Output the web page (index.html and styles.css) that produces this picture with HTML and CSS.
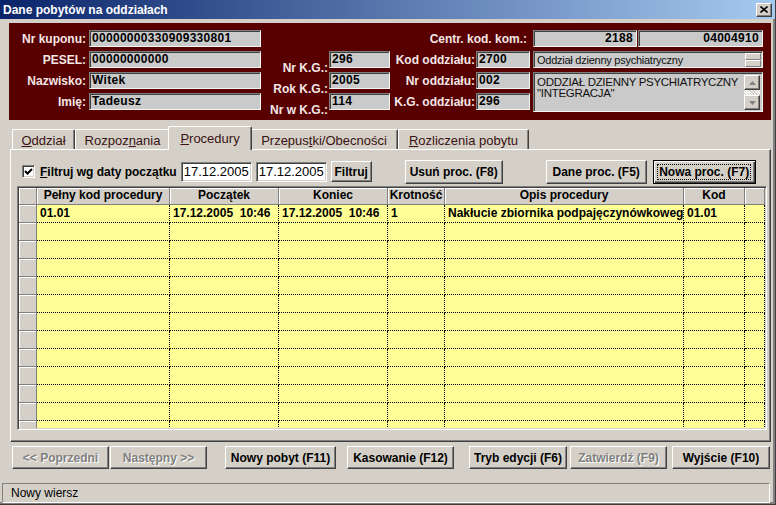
FILE: index.html
```html
<!DOCTYPE html>
<html lang="pl">
<head>
<meta charset="utf-8">
<title>Dane pobytów na oddziałach</title>
<link rel="stylesheet" href="styles.css">
</head>
<body>
<div class="window">
  <div class="titlebar">
    <span class="title">Dane pobytów na oddziałach</span>
    <span class="close"><svg width="8" height="7" viewBox="0 0 8 7"><path d="M0.5 0.5 L7.5 6.5 M7.5 0.5 L0.5 6.5" stroke="#000" stroke-width="1.6" fill="none"/></svg></span>
  </div>

  <div class="content">
    <div class="patient">
      <span class="plabel c1 r1">Nr kuponu:</span>
      <span class="fld c2 r1">00000000330909330801</span>
      <span class="plabel centr r1">Centr. kod. kom.:</span>
      <span class="pair c7 r1"><span class="fld num w104">2188</span><span class="fld num grow">04004910</span></span>

      <span class="plabel c1 r2">PESEL:</span>
      <span class="fld c2 r2">00000000000</span>
      <span class="plabel low c3 r2">Nr K.G.:</span>
      <span class="fld c4 r2">296</span>
      <span class="plabel c5 r2">Kod oddziału:</span>
      <span class="fld c6 r2">2700</span>
      <span class="fld combo c7 r2"><span class="combo-text">Oddział dzienny psychiatryczny</span><span class="spin"><span class="spin-btn"></span><span class="spin-btn"></span></span></span>

      <span class="plabel c1 r3">Nazwisko:</span>
      <span class="fld c2 r3">Witek</span>
      <span class="plabel low c3 r3">Rok K.G.:</span>
      <span class="fld c4 r3">2005</span>
      <span class="plabel c5 r3">Nr oddziału:</span>
      <span class="fld c6 r3">002</span>
      <span class="fld memo c7 r34">
        <span class="memo-text">ODDZIAŁ DZIENNY PSYCHIATRYCZNY<br>"INTEGRACJA"</span>
        <span class="vscroll">
          <span class="sb-btn"><svg width="7" height="4" viewBox="0 0 7 4"><path d="M3.5 0 L7 4 L0 4 Z" fill="#808080"/></svg></span>
          <span class="sb-track"></span>
          <span class="sb-btn"><svg width="7" height="4" viewBox="0 0 7 4"><path d="M0 0 L7 0 L3.5 4 Z" fill="#808080"/></svg></span>
        </span>
      </span>

      <span class="plabel c1 r4">Imię:</span>
      <span class="fld c2 r4">Tadeusz</span>
      <span class="plabel low c3 r4">Nr w K.G.:</span>
      <span class="fld c4 r4">114</span>
      <span class="plabel c5 r4">K.G. oddziału:</span>
      <span class="fld c6 r4">296</span>
    </div>

    <div class="tabs">
      <span class="tab t1"><u>O</u>ddział</span>
      <span class="tab t2">Rozpoz<u>n</u>ania</span>
      <span class="tab t3 active"><u>P</u>rocedury</span>
      <span class="tab t4">Przepus<u>t</u>ki/Obecności</span>
      <span class="tab t5"><u>R</u>ozliczenia pobytu</span>
    </div>

    <div class="panel">
      <div class="filter">
        <span class="check"><svg width="9" height="9" viewBox="0 0 9 9"><path d="M1 4 L3.5 6.5 L8 2" stroke="#000" stroke-width="2" fill="none"/></svg></span>
        <span class="flabel"><u>F</u>iltruj wg daty początku</span>
        <span class="date d1">17.12.2005</span>
        <span class="date d2">17.12.2005</span>
        <span class="btn b-filtruj">Filtruj</span>
        <span class="btn b-usun">Usuń proc. (F8)</span>
        <span class="btn b-dane">Dane proc. (F5)</span>
        <span class="btn default b-nowa"><span class="focus">Nowa proc. (F7)</span></span>
      </div>

      <div class="grid">
        <div class="grow-row head">
          <span class="ind"></span>
          <span class="hc">Pełny kod procedury</span>
          <span class="hc">Początek</span>
          <span class="hc">Koniec</span>
          <span class="hc">Krotność</span>
          <span class="hc">Opis procedury</span>
          <span class="hc">Kod</span>
          <span class="hc"></span>
        </div>
        <div class="grid-body">
          <div class="grow-row"><span class="ind"></span><span class="dc">01.01</span><span class="dc">17.12.2005  10:46</span><span class="dc">17.12.2005  10:46</span><span class="dc">1</span><span class="dc">Nakłucie zbiornika podpajęczynówkoweg</span><span class="dc">01.01</span><span class="dc"></span></div>
          <div class="grow-row"><span class="ind"></span><span class="dc"></span><span class="dc"></span><span class="dc"></span><span class="dc"></span><span class="dc"></span><span class="dc"></span><span class="dc"></span></div>
          <div class="grow-row"><span class="ind"></span><span class="dc"></span><span class="dc"></span><span class="dc"></span><span class="dc"></span><span class="dc"></span><span class="dc"></span><span class="dc"></span></div>
          <div class="grow-row"><span class="ind"></span><span class="dc"></span><span class="dc"></span><span class="dc"></span><span class="dc"></span><span class="dc"></span><span class="dc"></span><span class="dc"></span></div>
          <div class="grow-row"><span class="ind"></span><span class="dc"></span><span class="dc"></span><span class="dc"></span><span class="dc"></span><span class="dc"></span><span class="dc"></span><span class="dc"></span></div>
          <div class="grow-row"><span class="ind"></span><span class="dc"></span><span class="dc"></span><span class="dc"></span><span class="dc"></span><span class="dc"></span><span class="dc"></span><span class="dc"></span></div>
          <div class="grow-row"><span class="ind"></span><span class="dc"></span><span class="dc"></span><span class="dc"></span><span class="dc"></span><span class="dc"></span><span class="dc"></span><span class="dc"></span></div>
          <div class="grow-row"><span class="ind"></span><span class="dc"></span><span class="dc"></span><span class="dc"></span><span class="dc"></span><span class="dc"></span><span class="dc"></span><span class="dc"></span></div>
          <div class="grow-row"><span class="ind"></span><span class="dc"></span><span class="dc"></span><span class="dc"></span><span class="dc"></span><span class="dc"></span><span class="dc"></span><span class="dc"></span></div>
          <div class="grow-row"><span class="ind"></span><span class="dc"></span><span class="dc"></span><span class="dc"></span><span class="dc"></span><span class="dc"></span><span class="dc"></span><span class="dc"></span></div>
          <div class="grow-row"><span class="ind"></span><span class="dc"></span><span class="dc"></span><span class="dc"></span><span class="dc"></span><span class="dc"></span><span class="dc"></span><span class="dc"></span></div>
          <div class="grow-row"><span class="ind"></span><span class="dc"></span><span class="dc"></span><span class="dc"></span><span class="dc"></span><span class="dc"></span><span class="dc"></span><span class="dc"></span></div>
          <div class="grow-row"><span class="ind"></span><span class="dc"></span><span class="dc"></span><span class="dc"></span><span class="dc"></span><span class="dc"></span><span class="dc"></span><span class="dc"></span></div>
        </div>
      </div>
    </div>

    <div class="actions">
      <span class="btn disabled a-prev">&lt;&lt; Poprzedni</span>
      <span class="btn disabled a-next">Następny &gt;&gt;</span>
      <span class="btn a-new">Nowy pobyt (F11)</span>
      <span class="btn a-del">Kasowanie (F12)</span>
      <span class="btn a-edit">Tryb edycji (F6)</span>
      <span class="btn disabled a-ok">Zatwierdź (F9)</span>
      <span class="btn a-exit">Wyjście (F10)</span>
    </div>
  </div>

  <div class="statusbar"><span class="status-text">Nowy wiersz</span></div>
</div>
</body>
</html>
```

FILE: styles.css
```css
* { box-sizing: border-box; }

html, body {
  margin: 0;
  padding: 0;
}

body {
  width: 776px;
  height: 505px;
  overflow: hidden;
  background: #D4D0C8;
  font-family: "Liberation Sans", Arial, sans-serif;
  font-size: 12px;
  color: #000;
}

.window {
  width: 776px;
  height: 505px;
  display: flex;
  flex-direction: column;
  border-right: 1px solid #404040;
  border-bottom: 1px solid #404040;
  box-shadow: inset -2px -2px 0 #808080;
}

/* ---------- title bar ---------- */
.titlebar {
  flex: none;
  height: 19px;
  display: flex;
  align-items: center;
  justify-content: space-between;
  padding: 0 3px 0 3px;
  background: linear-gradient(to right, #0A246A, #A6CAF0);
}

.title {
  color: #fff;
  font-weight: bold;
  font-size: 12px;
}

.close {
  width: 16px;
  height: 14px;
  display: flex;
  align-items: center;
  justify-content: center;
  background: #D4D0C8;
  border: 1px solid;
  border-color: #fff #404040 #404040 #fff;
  box-shadow: inset -1px -1px 0 #808080;
}

/* ---------- content ---------- */
.content {
  flex: none;
  padding: 4px 0 0 9px;
}

/* ---------- patient header ---------- */
.patient {
  width: 762px;
  height: 97px;
  background: #580000;
  padding-top: 7px;
  display: grid;
  grid-template-columns: 80px 172px 68px 61px 86px 54px 233px;
  grid-template-rows: repeat(4, 17px);
  row-gap: 4px;
}

.c1 { grid-column: 1; }
.c2 { grid-column: 2; }
.c3 { grid-column: 3; }
.c4 { grid-column: 4; }
.c5 { grid-column: 5; }
.c6 { grid-column: 6; }
.c7 { grid-column: 7; margin-left: 3px; }
.centr { grid-column: 3 / 7; padding-right: 10px; }
.r1 { grid-row: 1; }
.r2 { grid-row: 2; }
.r3 { grid-row: 3; }
.r4 { grid-row: 4; }
.r34 { grid-row: 3 / 5; }

.plabel {
  color: #F3E6E6;
  font-weight: bold;
  font-size: 12px;
  text-align: right;
  align-self: center;
  white-space: nowrap;
  padding-right: 3px;
  line-height: 14px;
}

.plabel.low {
  align-self: end;
  margin-bottom: -7px;
  padding-right: 1px;
}

.c5.plabel { padding-right: 1px; }

.fld {
  display: block;
  height: 17px;
  background: #CACACA;
  border: 1px solid;
  border-color: #808080 #F4F4F4 #F4F4F4 #808080;
  box-shadow: inset 1px 1px 0 #404040;
  font-weight: bold;
  font-size: 12px;
  letter-spacing: 0.3px;
  line-height: 14px;
  padding: 0 3px 0 2px;
  white-space: nowrap;
  overflow: hidden;
}

.pair {
  display: flex;
  gap: 1px;
}

.w104 { width: 104px; flex: none; }
.grow { flex: 1; }
.num { text-align: right; }

.combo {
  display: flex;
  align-items: center;
  padding-right: 1px;
  height: 17px;
}

.combo-text {
  flex: 1;
  font-weight: normal;
  font-size: 11px;
  letter-spacing: -0.25px;
  color: #101010;
  padding-left: 1px;
}

.spin {
  width: 16px;
  display: flex;
  flex-direction: column;
  gap: 0;
}

.spin-btn {
  height: 7px;
  background: #D4D0C8;
  border: 1px solid;
  border-color: #fff #808080 #808080 #fff;
}

.memo {
  height: 40px;
  display: flex;
  padding: 2px 2px 1px 3px;
}

.memo-text {
  flex: 1;
  font-weight: normal;
  font-size: 11.5px;
  letter-spacing: -0.3px;
  line-height: 11px;
  color: #101010;
  padding-top: 2px;
  white-space: nowrap;
}

.vscroll {
  width: 16px;
  display: flex;
  flex-direction: column;
}

.sb-btn {
  height: 15px;
  display: flex;
  align-items: center;
  justify-content: center;
  background: #D4D0C8;
  border: 1px solid;
  border-color: #fff #404040 #404040 #fff;
  box-shadow: inset -1px -1px 0 #808080;
}

.sb-track {
  flex: 1;
  background-color: #E6E4E0;
  background-image: repeating-linear-gradient(45deg, #fff 0 1px, #D4D0C8 1px 2px);
}

/* ---------- tabs ---------- */
.tabs {
  display: flex;
  align-items: flex-end;
  height: 23px;
  margin-top: 6px;
  padding-left: 3px;
  position: relative;
  z-index: 2;
}

.tab {
  height: 20px;
  display: flex;
  align-items: center;
  justify-content: center;
  font-size: 13px;
  color: #3A1212;
  background: #D4D0C8;
  border-left: 1px solid #fff;
  border-top: 1px solid #fff;
  border-right: 1px solid #404040;
  box-shadow: inset -1px 0 0 #808080;
  border-radius: 2px 2px 0 0;
  padding-top: 1px;
  white-space: nowrap;
}

.t1 { width: 63px; }
.t2 { width: 95px; }
.t3 { width: 80px; }
.t4 { width: 148px; }
.t5 { width: 131px; }

.tab.active {
  width: 84px;
  height: 24px;
  margin: 0 -2px -1px -2px;
  position: relative;
  z-index: 3;
  padding-top: 0;
  padding-bottom: 1px;
}

/* ---------- tab panel ---------- */
.panel {
  width: 761px;
  height: 293px;
  margin-left: 1px;
  background: #D4D0C8;
  border: 1px solid;
  border-color: #fff #404040 #404040 #fff;
  box-shadow: inset -1px -1px 0 #808080;
  padding: 9px 0 0 6px;
}

.filter {
  height: 25px;
  display: flex;
  align-items: center;
  padding-left: 5px;
}

.check {
  width: 13px;
  height: 13px;
  flex: none;
  background: #fff;
  border: 1px solid;
  border-color: #808080 #fff #fff #808080;
  box-shadow: inset 1px 1px 0 #404040, inset -1px -1px 0 #D4D0C8;
  display: flex;
  align-items: center;
  justify-content: center;
}

.flabel {
  margin-left: 5px;
  font-weight: bold;
  font-size: 12px;
  white-space: nowrap;
}

.date {
  height: 20px;
  width: 71px;
  flex: none;
  background: #fff;
  border: 1px solid;
  border-color: #808080 #fff #fff #808080;
  box-shadow: inset 1px 1px 0 #404040, inset -1px -1px 0 #D4D0C8;
  font-size: 13px;
  line-height: 17px;
  padding-left: 2px;
}

.d1 { margin-left: 4px; }
.d2 { margin-left: 4px; }

.btn {
  display: flex;
  align-items: center;
  justify-content: center;
  flex: none;
  background: #D4D0C8;
  border: 1px solid;
  border-color: #fff #404040 #404040 #fff;
  box-shadow: inset -1px -1px 0 #808080;
  font-weight: bold;
  font-size: 12px;
  white-space: nowrap;
}

.b-filtruj { width: 41px; height: 21px; margin-left: 4px; }
.b-usun { width: 98px; height: 24px; margin-left: 33px; }
.b-dane { width: 101px; height: 24px; margin-left: 43px; }
.b-nowa { width: 103px; height: 24px; margin-left: 6px; }

.btn.default {
  border: 1px solid #000;
  box-shadow: inset 1px 1px 0 #fff, inset -1px -1px 0 #404040, inset -2px -2px 0 #808080;
}

.focus {
  border: 1px dotted #000;
  padding: 1px 1px 0 1px;
  line-height: 13px;
}

.btn.disabled {
  color: #808080;
  text-shadow: 1px 1px 0 #fff;
}

/* ---------- grid ---------- */
.grid {
  width: 750px;
  height: 244px;
  margin-top: 2px;
  border: 1px solid;
  border-color: #808080 #fff #fff #808080;
  box-shadow: inset 1px 1px 0 #404040, inset -1px -1px 0 #D4D0C8;
  padding: 1px;
  overflow: hidden;
}

.grow-row {
  display: grid;
  grid-template-columns: 18px 133px 109px 109px 57px 239px 61px 20px;
  height: 18px;
}

.grow-row.head { height: 17px; }

.ind {
  background: #D4D0C8;
  border-right: 1px solid #808080;
  border-bottom: 1px solid #808080;
  box-shadow: inset 1px 1px 0 #fff;
}

.hc {
  background: #D4D0C8;
  border-right: 1px solid #808080;
  border-bottom: 1px solid #808080;
  box-shadow: inset 1px 1px 0 #fff;
  font-weight: bold;
  font-size: 12px;
  text-align: center;
  line-height: 15px;
  white-space: nowrap;
  overflow: hidden;
}

.grid-body {
  height: 223px;
  overflow: hidden;
}

.dc {
  background: #FFFF96;
  border-right: 1px dotted #000;
  border-bottom: 1px dotted #000;
  font-weight: bold;
  font-size: 12px;
  line-height: 16px;
  padding-left: 3px;
  white-space: pre;
  overflow: hidden;
}

/* ---------- bottom actions ---------- */
.actions {
  display: flex;
  margin-top: 4px;
  padding-left: 3px;
}

.actions .btn { height: 23px; }

.a-prev { width: 97px; }
.a-next { width: 97px; margin-left: 1px; }
.a-new { width: 111px; margin-left: 18px; }
.a-del { width: 107px; margin-left: 11px; }
.a-edit { width: 98px; margin-left: 15px; }
.a-ok { width: 97px; margin-left: 3px; }
.a-exit { width: 98px; margin-left: 5px; }

/* ---------- status bar ---------- */
.statusbar {
  flex: none;
  width: 768px;
  height: 20px;
  margin: 14px 0 0 2px;
  border: 1px solid;
  border-color: #808080 #fff #fff #808080;
  display: flex;
  align-items: center;
  padding-left: 8px;
}

.status-text {
  font-size: 12px;
}
```
